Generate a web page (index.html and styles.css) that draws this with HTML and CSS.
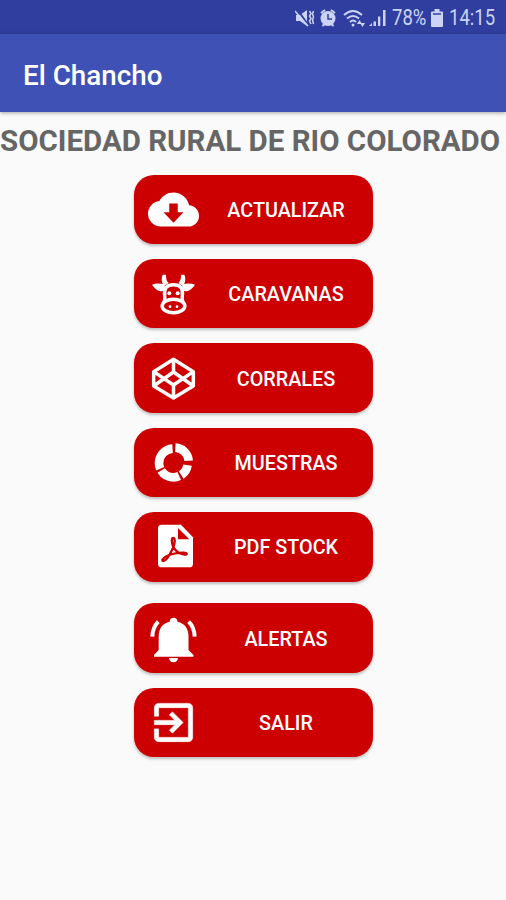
FILE: index.html
```html
<!DOCTYPE html>
<html lang="es">
<head>
    <meta charset="UTF-8">
    <meta name="viewport" content="width=device-width, initial-scale=1.0">
    <title>El Chancho</title>
    <link rel="stylesheet" href="styles.css">
</head>
<body>

    <!-- barra de estado -->
    <div class="status-bar">
        <svg class="status-icons" width="92" height="22" viewBox="0 0 92 22">
            <path d="M1 8h4l7-5v16l-7-5H1z"/>
            <path class="slash" d="M2 2l12 17"/>
            <path class="line thin" d="M0 4l13 15M14.500 4l1.500 2.500-1.500 2.500 1.500 2.500-1.500 2.500 1.500 3M18.500 4l-1 3 1 3-1 3 1 4"/>
            <circle cx="33" cy="11.500" r="7.500"/>
            <path class="line" d="M26 6l4-3M40 6l-4-3M27.500 19l2-2M38.500 19l-2-2"/>
            <path class="dark thin" d="M33 7v5h4"/>
            <path class="line" d="M49 8q9-8 18 0M52 11.500q6-5 12 0M55 15q3-3 6 0"/>
            <circle cx="58" cy="18" r="1.500"/>
            <path d="M62 17l2.500-4 2.500 4zM65 16h5l-2.500 4z"/>
            <path d="M74 19l3-3v3zM78.500 14.500h2.500V19h-2.500zM83 9.500h2.300V19H83zM88 3h2.500v16H88z"/>
        </svg>
        <span class="percent">78%</span>
        <svg class="battery" width="12" height="18" viewBox="0 0 12 18">
            <path d="M3.500 0h5v2.500h2.500q1 0 1 1V17q0 1-1 1H1q-1 0-1-1V3.500q0-1 1-1h2.500z"/>
            <path class="dark thin" d="M2 5h8"/>
        </svg>
        <span class="clock">14:15</span>
    </div>

    <div class="app-bar">El Chancho</div>

    <h1>SOCIEDAD RURAL DE RIO COLORADO</h1>

    <!-- menu principal -->
    <div class="menu">
        <button>
            <svg class="icon" viewBox="0 0 24 24">
                <path d="M19.350 10.040C18.670 6.590 15.640 4 12 4 9.110 4 6.600 5.640 5.350 8.040 2.340 8.360 0 10.910 0 14c0 3.310 2.690 6 6 6h13c2.760 0 5-2.240 5-5 0-2.640-2.050-4.780-4.650-4.960z"/>
                <path class="red" d="M16.700 13.300L12 18.200l-4.700-4.900H10V9.200h4v4.100z"/>
            </svg>
            <span>ACTUALIZAR</span>
        </button>
        <button>
            <svg class="icon" viewBox="0 0 153 153">
                <g class="stroke">
                    <path d="M48 102q4-8 2-20-4-32 26.500-32T103 82q-2 12 2 20"/>
                    <ellipse cx="76.500" cy="114" rx="34" ry="20"/>
                </g>
                <path d="M54 20q-1 17 8 25l-14 9q-12-18-4-34zM99 20q1 17-8 25l14 9q12-18 4-34z"/>
                <path d="M12 50q17-6 37-1l3 15q-6 8-18 5-12-4-22-19zM141 50q-17-6-37-1l-3 15q6 8 18 5 12-4 22-19z"/>
                <circle cx="64" cy="76" r="6"/>
                <circle cx="89" cy="76" r="6"/>
                <circle cx="66" cy="116" r="4"/>
                <circle cx="87" cy="116" r="4"/>
            </svg>
            <span>CARAVANAS</span>
        </button>
        <button>
            <svg class="icon" viewBox="0 0 153 153">
                <path class="stroke" d="M76.500 19L136 56v43l-59.500 36L17 99V56zM76.500 19v38L136 99M76.500 57L17 99M17 56l59.500 40L136 56M76.500 96v39"/>
            </svg>
            <span>CORRALES</span>
        </button>
        <button>
            <svg class="icon ring" viewBox="0 0 153 153">
                <circle cx="80" cy="74" r="42" pathLength="360" stroke-dasharray="83 277" stroke-dashoffset="-3"/>
                <circle cx="76" cy="78" r="43" pathLength="360" stroke-dasharray="48 312" stroke-dashoffset="-98"/>
                <circle cx="76" cy="78" r="43" pathLength="360" stroke-dasharray="82 278" stroke-dashoffset="-155"/>
                <circle cx="76" cy="78" r="43" pathLength="360" stroke-dasharray="110 250" stroke-dashoffset="-245"/>
            </svg>
            <span>MUESTRAS</span>
        </button>
        <button>
            <svg class="icon" viewBox="0 0 153 153">
                <path d="M41 11h58l36 38v79q0 11-11 11H41q-11 0-11-11V22q0-11 11-11z"/>
                <path class="red" d="M90 21v34h34z"/>
                <path class="pen" d="M76 78c-6-14-6-27 0-27s5 14 0 28c-9 20-22 41-30 41-7 0-2-11 17-18 17-5 33-8 44-7 12 1 11 7 3 6-14-2-27-10-34-23z"/>
            </svg>
            <span>PDF STOCK</span>
        </button>
        <button class="spaced">
            <svg class="icon" viewBox="0 0 153 153">
                <path d="M76.500 14q11 0 12 12 33 8 33 45v40l15 15v5H18v-5l14-15V71q0-37 33-45 1-12 11.500-12zM63 135h27q-2 13-13.500 13T63 135z"/>
                <path class="wave" d="M13 71q1-28 18-45M140 71q-1-28-18-45"/>
            </svg>
            <span>ALERTAS</span>
        </button>
        <button>
            <svg class="icon" viewBox="0 0 24 24">
                <path class="exit" d="M10.090 15.590L11.500 17l5-5-5-5-1.410 1.410L12.670 11H3v2h9.670l-2.580 2.590zM19 3H5c-1.110 0-2 .9-2 2v4h2V5h14v14H5v-4H3v4c0 1.100.89 2 2 2h14c1.100 0 2-.9 2-2V5c0-1.100-.9-2-2-2z"/>
            </svg>
            <span>SALIR</span>
        </button>
    </div>

</body>
</html>
```

FILE: styles.css
```css
body {
    margin: 0;
    min-height: 100vh;
    background: #fafafa;
    font-family: Roboto, 'Liberation Sans', sans-serif;
    overflow: hidden;
}

/* barra de estado */
.status-bar {
    display: flex;
    justify-content: flex-end;
    align-items: center;
    box-sizing: border-box;
    height: 34px;
    padding: 2px 10px 0 0;
    background: #303f9f;
    color: #ccd3f5;
    font-size: 21.5px;
    line-height: 32px;
}

.status-icons,
.battery {
    fill: #ccd3f5;
}

.status-icons {
    margin-right: 5px;
}

.battery {
    margin: 0 6px 0 5px;
}

.line,
.slash,
.dark {
    fill: none;
    stroke: #ccd3f5;
    stroke-width: 2;
}

.slash,
.dark {
    stroke: #303f9f;
}

.thin {
    stroke-width: 1.5;
}

.percent,
.clock {
    transform: scaleX(0.86);
    transform-origin: left;
    white-space: nowrap;
}

.percent {
    width: 34px;
}

.clock {
    width: 47px;
}

.app-bar {
    height: 78px;
    padding-left: 23px;
    background: #3f51b5;
    box-shadow: 0 1px 4px rgba(0, 0, 0, 0.35);
    color: #fff;
    font-size: 27.8px;
    font-weight: 500;
    line-height: 83px;
}

h1 {
    margin: 0;
    padding-top: 12px;
    height: 50.5px;
    color: #666;
    font-size: 29.5px;
    font-weight: bold;
    line-height: 35px;
    white-space: nowrap;
}

/* menu principal */
.menu {
    display: flex;
    flex-direction: column;
    align-items: center;
    gap: 14.9px;
}

button {
    display: flex;
    align-items: center;
    width: 239px;
    height: 69.5px;
    padding: 0 0 0 14px;
    border: none;
    border-radius: 20px;
    background: #cc0000;
    box-shadow: 0 2px 3px rgba(0, 0, 0, 0.25);
    color: #fff;
    font-family: inherit;
    font-size: 19.8px;
    font-weight: 500;
}

button span {
    flex: 1;
    padding: 2px 0 0 1px;
    text-align: center;
}

.spaced {
    margin-top: 7px;
}

.icon {
    width: 51px;
    height: 51px;
    fill: #fff;
}

.red {
    fill: #cc0000;
}

.stroke {
    fill: none;
    stroke: #fff;
    stroke-width: 10.5;
    stroke-linejoin: round;
}

.exit {
    stroke: #fff;
    stroke-width: 0.3;
}

.ring {
    fill: none;
    stroke: #fff;
    stroke-width: 26;
}

.ring circle {
    transform: rotate(-90deg);
    transform-box: fill-box;
    transform-origin: center;
}

.pen {
    fill: none;
    stroke: #cc0000;
    stroke-width: 7;
}

.wave {
    fill: none;
    stroke: #fff;
    stroke-width: 12;
}
```
